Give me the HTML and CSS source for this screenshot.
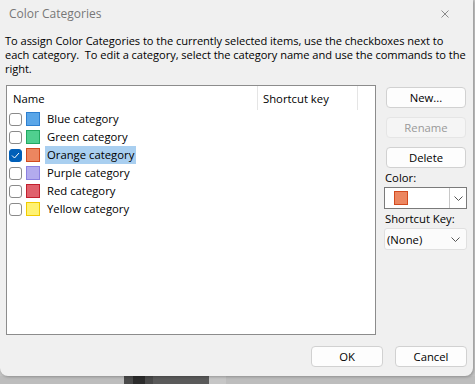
FILE: index.html
```html
<!DOCTYPE html>
<html lang="en">
<head>
    <meta charset="UTF-8">
    <title>Color Categories</title>
    <link rel="stylesheet" href="styles.css">
</head>
<body>
<div class="dialog">
    <div class="titlebar">
        <span class="title">Color Categories</span>
        <svg class="close" width="8" height="8" viewBox="0 0 8 8">
            <path d="M0.5 0.5 L7.5 7.5 M7.5 0.5 L0.5 7.5" stroke="#8a8a8a" stroke-width="1" fill="none"/>
        </svg>
    </div>

    <p class="intro">To assign Color Categories to the currently selected items, use the checkboxes next to<br>each category.&nbsp; To edit a category, select the category name and use the commands to the<br>right.</p>

    <div class="main">
        <div class="list">
            <div class="list-head">
                <span class="col-name">Name</span>
                <span class="col-key">Shortcut key</span>
                <span class="col-rest"></span>
            </div>
            <div class="row">
                <span class="check"></span>
                <span class="swatch blue"></span>
                <span class="label">Blue category</span>
            </div>
            <div class="row">
                <span class="check"></span>
                <span class="swatch green"></span>
                <span class="label">Green category</span>
            </div>
            <div class="row">
                <span class="check checked">
                    <svg width="9" height="7" viewBox="0 0 9 7"><path d="M1 3.5 L3.5 6 L8 1" stroke="#fff" stroke-width="1" fill="none"/></svg>
                </span>
                <span class="swatch orange"></span>
                <span class="label selected">Orange category</span>
            </div>
            <div class="row">
                <span class="check"></span>
                <span class="swatch purple"></span>
                <span class="label">Purple category</span>
            </div>
            <div class="row">
                <span class="check"></span>
                <span class="swatch red"></span>
                <span class="label">Red category</span>
            </div>
            <div class="row">
                <span class="check"></span>
                <span class="swatch yellow"></span>
                <span class="label">Yellow category</span>
            </div>
        </div>

        <div class="side">
            <button class="btn">New...</button>
            <button class="btn" disabled>Rename</button>
            <button class="btn last">Delete</button>
            <div class="field-label">Color:</div>
            <div class="combo color-combo">
                <span class="swatch orange"></span>
                <span class="drop">
                    <svg width="9" height="5" viewBox="0 0 9 5"><path d="M0.5 0.5 L4.5 4.5 L8.5 0.5" stroke="#555" stroke-width="1" fill="none"/></svg>
                </span>
            </div>
            <div class="field-label">Shortcut Key:</div>
            <div class="combo key-combo">
                <span>(None)</span>
                <svg width="9" height="5" viewBox="0 0 9 5"><path d="M0.5 0.5 L4.5 4.5 L8.5 0.5" stroke="#555" stroke-width="1" fill="none"/></svg>
            </div>
        </div>
    </div>

    <div class="footer">
        <button class="btn wide">OK</button>
        <button class="btn wide">Cancel</button>
    </div>
</div>
<div class="desktop">
    <span class="task-a"><span class="task-icon"></span></span>
    <span class="task-b"></span>
    <span class="task-c"></span>
</div>
</body>
</html>
```

FILE: styles.css
```css
:root {
    --face: #f0f0f0;
    --text: #000000;
    --border: #d1d1d1;
    --frame: #8c8c8c;
    --select: #a9cff0;
    --accent: #005fb8;
}

body {
    margin: 0;
    font-family: "Open Sans", "Noto Sans", sans-serif;
    font-size: 11.3px;
    color: var(--text);
    background: #c4c4c4;
    width: 475px;
    height: 384px;
    overflow: hidden;
}

.dialog {
    width: 473px;
    height: 376px;
    background: var(--face);
    border-radius: 0 0 8px 8px;
    box-shadow: 1px 1px 3px rgb(0 0 0 / 0.25);
    display: flex;
    flex-direction: column;
    position: relative;
    z-index: 1;
}

.titlebar {
    height: 26px;
    display: flex;
    align-items: center;
    justify-content: space-between;
    padding: 0 24px 0 9px;
}

.title {
    color: #777;
    font-size: 12px;
}

.close {
    margin-top: 1px;
}

.intro {
    margin: 8px 0 0 5px;
    width: 466px;
    font-size: 11.1px;
    line-height: 14px;
    white-space: nowrap;
    letter-spacing: -0.05px;
}

.main {
    display: flex;
    gap: 8px;
    margin: 9px 0 0 6px;
}

.list {
    width: 368px;
    height: 248px;
    border: 1px solid var(--frame);
    background: #fff;
}

.list-head {
    display: flex;
    height: 24px;
    align-items: center;
}

.list-head span {
    height: 24px;
    line-height: 26px;
}

.col-name {
    width: 244px;
    padding-left: 6px;
    border-right: 1px solid #e5e5e5;
}

.col-key {
    width: 94px;
    padding-left: 5px;
    border-right: 1px solid #e5e5e5;
}

.row {
    display: flex;
    align-items: center;
    height: 18px;
}

.check {
    width: 11px;
    height: 11px;
    border: 1px solid #8a8a8a;
    border-radius: 3px;
    margin-left: 2px;
    display: flex;
    align-items: center;
    justify-content: center;
    background: #fff;
}

.check.checked {
    background: var(--accent);
    border-color: var(--accent);
}

.swatch {
    width: 12px;
    height: 12px;
    border: 1px solid;
    margin-left: 4px;
}

.blue { background: #5aa6e8; border-color: #2d7fd0; }
.green { background: #50cf8f; border-color: #22a862; }
.orange { background: #ec8660; border-color: #d24a1e; }
.purple { background: #b3abee; border-color: #8b80e0; }
.red { background: #e0616c; border-color: #c2202e; }
.yellow { background: #fff272; border-color: #f2cb00; }

.label {
    margin-left: 5px;
    padding: 0 2px;
    height: 18px;
    line-height: 18px;
}

.label.selected {
    background: var(--select);
}

.side {
    width: 83px;
    display: flex;
    flex-direction: column;
    padding-top: 2px;
}

.btn {
    font: inherit;
    color: var(--text);
    background: #fdfdfd;
    border: 1px solid var(--border);
    border-radius: 4px;
    height: 21px;
    padding: 0;
    width: 80px;
    margin: 0 0 9px 2px;
}

.btn.last {
    margin-bottom: 2px;
}

.btn:disabled {
    color: #999;
    background: #f5f5f5;
    border-color: #e5e5e5;
}

.field-label {
    margin: 0 0 1px 1px;
    line-height: 16px;
}

.combo {
    height: 22px;
    display: flex;
    align-items: center;
    justify-content: space-between;
    box-sizing: border-box;
}

.color-combo {
    border: 1px solid #7a7a7a;
    background: #fff;
    padding-left: 9px;
    margin-bottom: 2px;
}

.color-combo .swatch {
    margin-left: 0;
}

.drop {
    width: 16px;
    height: 20px;
    border-left: 1px solid #c8c8c8;
    display: flex;
    align-items: center;
    justify-content: center;
}

.key-combo {
    border: 1px solid #e0e0e0;
    border-radius: 3px;
    background: #fbfbfb;
    padding: 0 6px 0 2px;
}

.footer {
    margin-top: auto;
    display: flex;
    justify-content: flex-end;
    gap: 12px;
    padding: 0 6px 9px 0;
}

.btn.wide {
    width: 72px;
    margin: 0;
}

.desktop {
    display: flex;
    height: 8px;
    background: #bdbdbd;
}

.task-a {
    margin-left: 124px;
    width: 29px;
    background: #4a4a4a;
    display: flex;
    justify-content: center;
}

.task-icon {
    width: 12px;
    background: #2c2c2c;
}

.task-b {
    width: 56px;
    background: #5a5a5a;
}

.task-c {
    width: 17px;
    background: #c6c6c6;
}
```
